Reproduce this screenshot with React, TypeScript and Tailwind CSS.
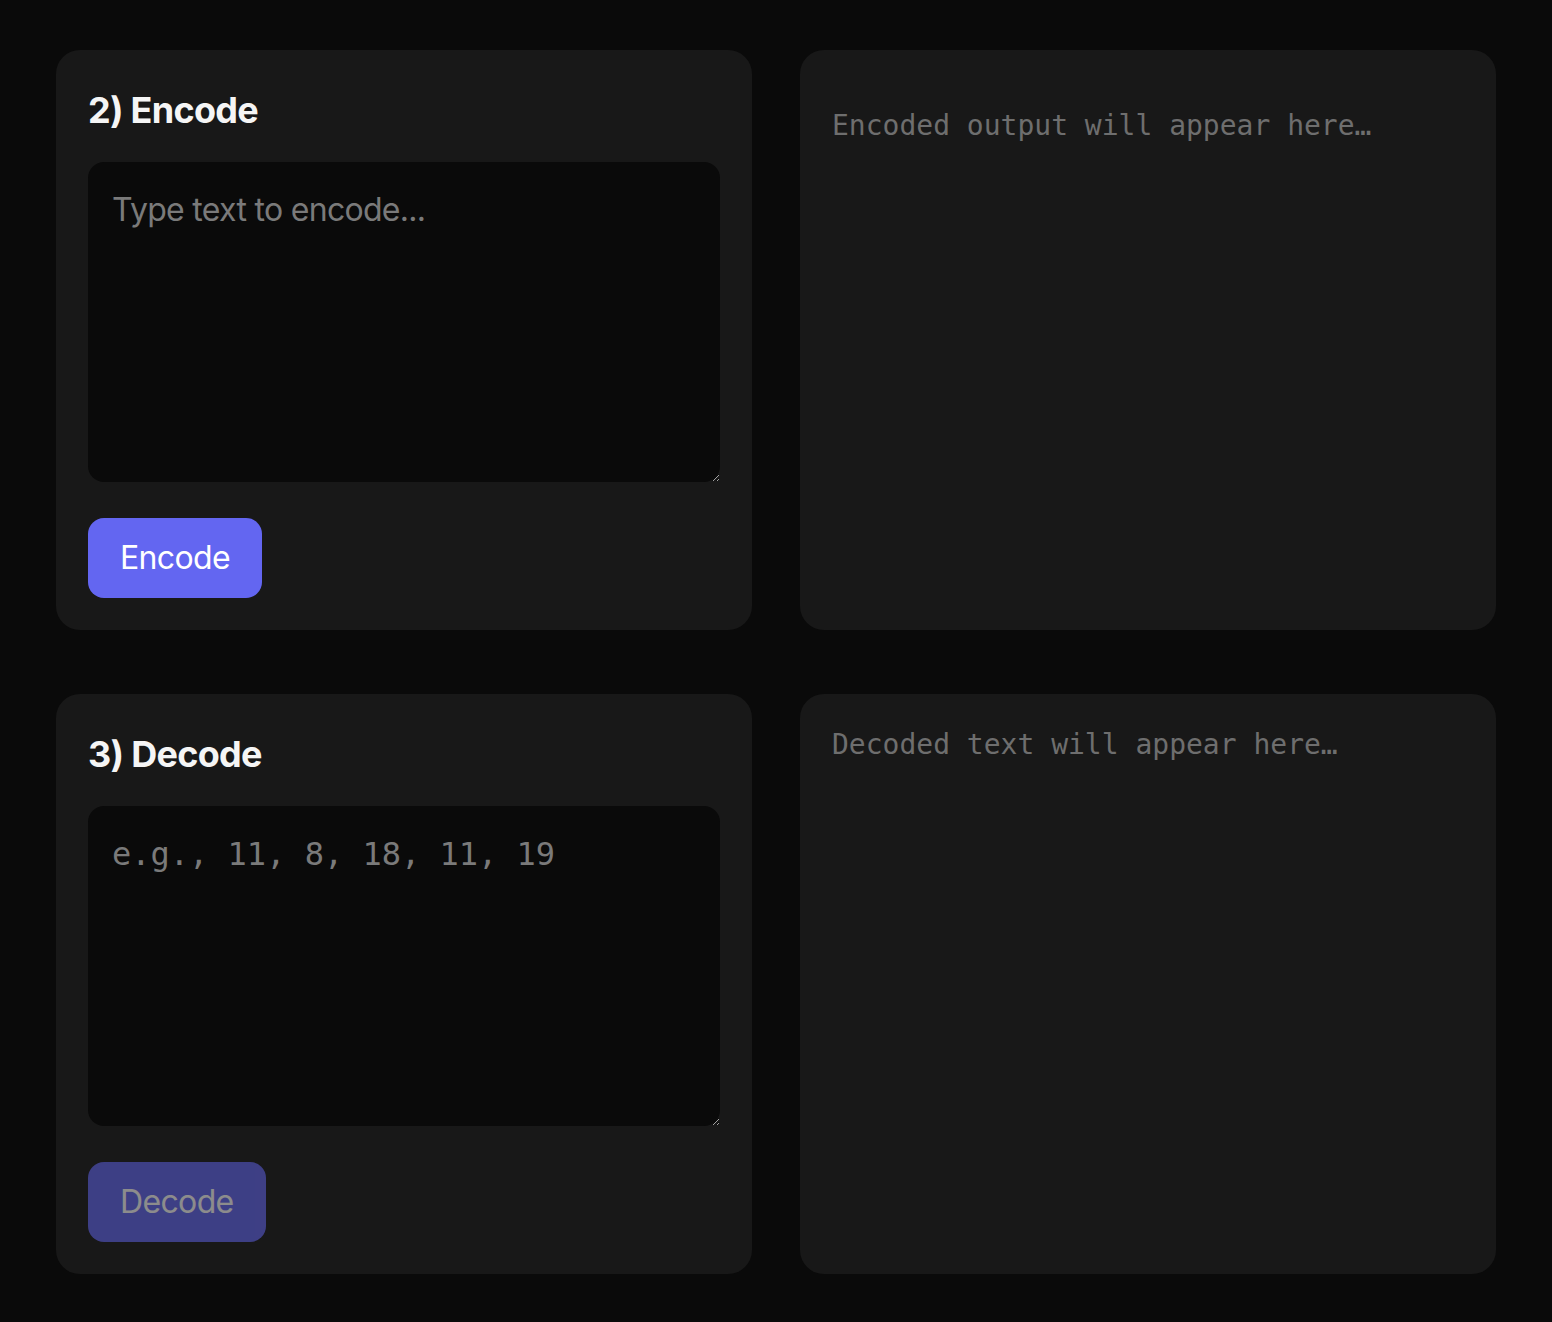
import { useState } from 'react';

const sans = "font-['Inter','Noto_Sans',sans-serif]";
const mono = "font-['DejaVu_Sans_Mono','Liberation_Mono',monospace]";

export default function App() {
  const [plain, setPlain] = useState('');
  const [codes, setCodes] = useState('');
  const [encoded, setEncoded] = useState('');
  const [decoded, setDecoded] = useState('');

  const handleEncode = () => {
    const out = plain
      .toLowerCase()
      .split('')
      .filter((c) => c >= 'a' && c <= 'z')
      .map((c) => c.charCodeAt(0) - 96);
    setEncoded(out.join(', '));
  };

  const handleDecode = () => {
    const out = codes
      .split(/[\s,]+/)
      .filter(Boolean)
      .map((n) => String.fromCharCode(Number(n) + 96));
    setDecoded(out.join(''));
  };

  return (
    <div className={`min-h-screen bg-[#0a0a0a] px-14 pt-[50px] pb-12 ${sans} [color-scheme:dark]`}>
      <div className="grid grid-cols-2 gap-x-12 gap-y-16">
        {/* encode */}
        <section className="rounded-3xl bg-[#181818] p-8">
          <h2 className="text-[36px] leading-[56px] font-bold tracking-[-0.02em] text-[#f5f5f5]">2) Encode</h2>
          <textarea
            value={plain}
            onChange={(e) => setPlain(e.target.value)}
            placeholder="Type text to encode..."
            className="mt-6 block h-[320px] w-full rounded-2xl bg-[#0a0a0a] px-6 py-6 text-[32px] leading-[48px] tracking-[-0.022em] text-[#e5e5e5] placeholder:text-[#7a7a7a] outline-none"
          />
          <button
            onClick={handleEncode}
            className="mt-9 rounded-2xl bg-[#6366f1] px-8 py-4 text-[32px] leading-[48px] tracking-[-0.02em] text-white"
          >
            Encode
          </button>
        </section>
        <section className="rounded-3xl bg-[#181818] px-8 pt-[57px] pb-8">
          <pre className={`${mono} text-[28px] leading-[38px] whitespace-pre-wrap text-[#6e6e6e]`}>
            {encoded || 'Encoded output will appear here…'}
          </pre>
        </section>

        {/* decode */}
        <section className="rounded-3xl bg-[#181818] p-8">
          <h2 className="text-[36px] leading-[56px] font-bold tracking-[-0.02em] text-[#f5f5f5]">3) Decode</h2>
          <textarea
            value={codes}
            onChange={(e) => setCodes(e.target.value)}
            placeholder="e.g., 11, 8, 18, 11, 19"
            className={`mt-6 block h-[320px] w-full rounded-2xl bg-[#0a0a0a] px-6 py-6 ${mono} text-[32px] leading-[48px] text-[#e5e5e5] placeholder:text-[#7a7a7a] outline-none`}
          />
          <button
            onClick={handleDecode}
            disabled={!codes.trim()}
            className="mt-9 rounded-2xl bg-[#6366f1] px-8 py-4 text-[32px] leading-[48px] tracking-[-0.02em] text-white disabled:opacity-50"
          >
            Decode
          </button>
        </section>
        <section className="rounded-3xl bg-[#181818] p-8">
          <pre className={`${mono} text-[28px] leading-[38px] whitespace-pre-wrap text-[#6e6e6e]`}>
            {decoded || 'Decoded text will appear here…'}
          </pre>
        </section>
      </div>
    </div>
  );
}
